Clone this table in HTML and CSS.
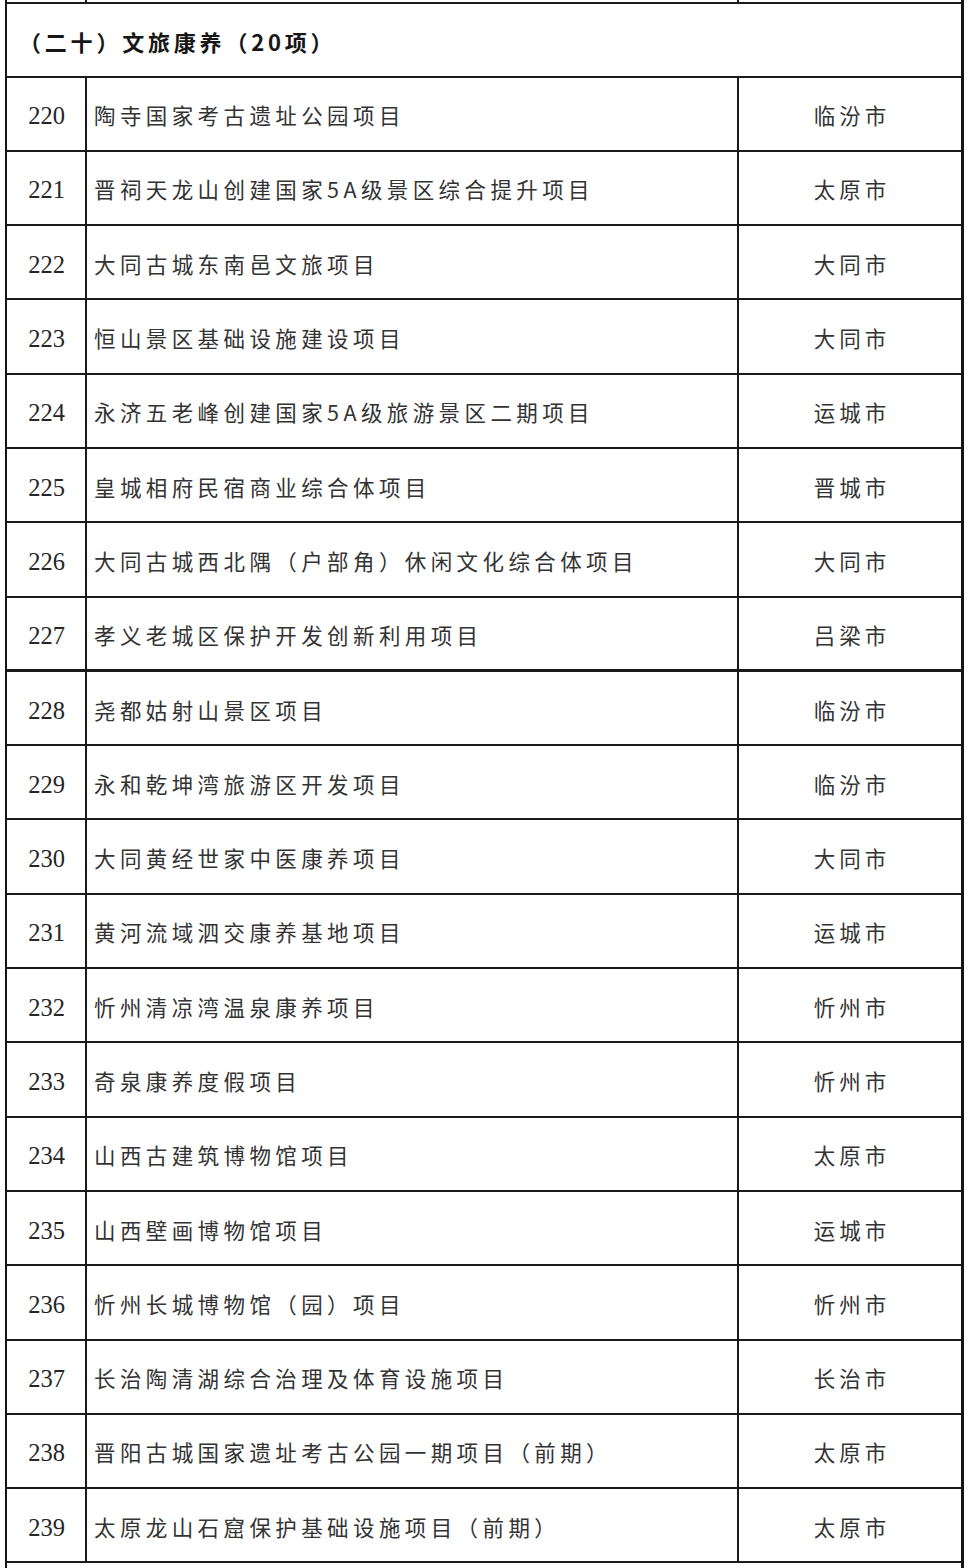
FILE: index.html
```html
<!DOCTYPE html>
<html lang="zh-CN">
<head>
<meta charset="utf-8">
<title>文旅康养</title>
<link rel="stylesheet" href="styles.css">
</head>
<body>
<div class="sheet">
  <div class="row stub-top"><div class="c-no"></div><div class="c-name"></div><div class="c-city"></div></div>
  <div class="row header"><div class="h-text">（二十）文旅康养（20项）</div></div>
  <div class="row item"><div class="c-no">220</div><div class="c-name">陶寺国家考古遗址公园项目</div><div class="c-city">临汾市</div></div>
  <div class="row item"><div class="c-no">221</div><div class="c-name">晋祠天龙山创建国家5A级景区综合提升项目</div><div class="c-city">太原市</div></div>
  <div class="row item"><div class="c-no">222</div><div class="c-name">大同古城东南邑文旅项目</div><div class="c-city">大同市</div></div>
  <div class="row item"><div class="c-no">223</div><div class="c-name">恒山景区基础设施建设项目</div><div class="c-city">大同市</div></div>
  <div class="row item"><div class="c-no">224</div><div class="c-name">永济五老峰创建国家5A级旅游景区二期项目</div><div class="c-city">运城市</div></div>
  <div class="row item"><div class="c-no">225</div><div class="c-name">皇城相府民宿商业综合体项目</div><div class="c-city">晋城市</div></div>
  <div class="row item"><div class="c-no">226</div><div class="c-name">大同古城西北隅（户部角）休闲文化综合体项目</div><div class="c-city">大同市</div></div>
  <div class="row item thick"><div class="c-no">227</div><div class="c-name">孝义老城区保护开发创新利用项目</div><div class="c-city">吕梁市</div></div>
  <div class="row item"><div class="c-no">228</div><div class="c-name">尧都姑射山景区项目</div><div class="c-city">临汾市</div></div>
  <div class="row item"><div class="c-no">229</div><div class="c-name">永和乾坤湾旅游区开发项目</div><div class="c-city">临汾市</div></div>
  <div class="row item"><div class="c-no">230</div><div class="c-name">大同黄经世家中医康养项目</div><div class="c-city">大同市</div></div>
  <div class="row item"><div class="c-no">231</div><div class="c-name">黄河流域泗交康养基地项目</div><div class="c-city">运城市</div></div>
  <div class="row item"><div class="c-no">232</div><div class="c-name">忻州清凉湾温泉康养项目</div><div class="c-city">忻州市</div></div>
  <div class="row item"><div class="c-no">233</div><div class="c-name">奇泉康养度假项目</div><div class="c-city">忻州市</div></div>
  <div class="row item"><div class="c-no">234</div><div class="c-name">山西古建筑博物馆项目</div><div class="c-city">太原市</div></div>
  <div class="row item"><div class="c-no">235</div><div class="c-name">山西壁画博物馆项目</div><div class="c-city">运城市</div></div>
  <div class="row item"><div class="c-no">236</div><div class="c-name">忻州长城博物馆（园）项目</div><div class="c-city">忻州市</div></div>
  <div class="row item"><div class="c-no">237</div><div class="c-name">长治陶清湖综合治理及体育设施项目</div><div class="c-city">长治市</div></div>
  <div class="row item"><div class="c-no">238</div><div class="c-name">晋阳古城国家遗址考古公园一期项目（前期）</div><div class="c-city">太原市</div></div>
  <div class="row item"><div class="c-no">239</div><div class="c-name">太原龙山石窟保护基础设施项目（前期）</div><div class="c-city">太原市</div></div>
  <div class="row stub-bottom"></div>
</div>
</body>
</html>
```
FILE: styles.css
```css
html, body {
  margin: 0;
  padding: 0;
  background: #ffffff;
}

.sheet {
  width: 959px;
  margin-left: 5px;
  box-sizing: border-box;
  border-left: 2px solid #151515;
  border-right: 3px solid #151515;
  font-family: "Noto Sans CJK SC", "Noto Sans", sans-serif;
  color: #333333;
}

.row {
  box-sizing: border-box;
  border-bottom: 2px solid #1a1a1a;
}

.item, .stub-top {
  display: grid;
  grid-template-columns: 80px 652px 222px;
}

.stub-top {
  height: 4px;
}

.stub-top .c-no,
.stub-top .c-name {
  border-right: 2px solid #1a1a1a;
}

.header {
  height: 73.5px;
  display: flex;
  align-items: center;
  padding-left: 12px;
}

.h-text {
  font-size: 22px;
  font-weight: 700;
  letter-spacing: 3.8px;
  color: #161616;
  padding-top: 2px;
}

.item {
  height: 74.3px;
}

.item.thick {
  border-bottom-width: 3px;
}

.c-no, .c-name, .c-city {
  display: flex;
  align-items: center;
  min-width: 0;
}

.item .c-no {
  justify-content: center;
  font-family: "Liberation Serif", "Times New Roman", serif;
  font-size: 24.5px;
  color: #262626;
  border-right: 2px solid #1a1a1a;
  padding-top: 5px;
  padding-left: 1px;
}

.item .c-name {
  padding-left: 7px;
  font-size: 21.5px;
  letter-spacing: 4.4px;
  white-space: nowrap;
  border-right: 2px solid #1a1a1a;
  padding-top: 2px;
}

.item .c-city {
  justify-content: center;
  font-size: 21.5px;
  letter-spacing: 4px;
  padding-left: 4px;
  padding-top: 2px;
}

.stub-bottom {
  height: 20px;
  border-bottom: none;
}
```
